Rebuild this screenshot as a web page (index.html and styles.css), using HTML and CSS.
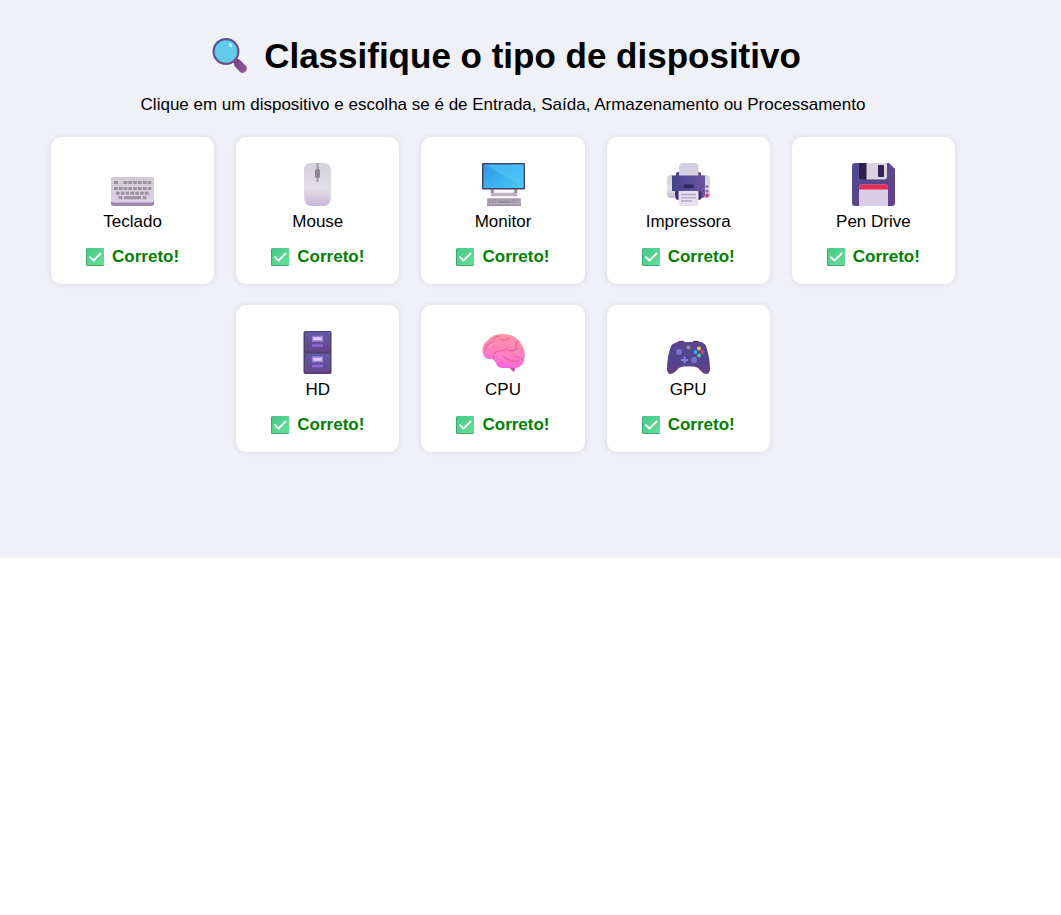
FILE: index.html
```html
<!DOCTYPE html>
<html lang="pt-BR">
<head>
<meta charset="utf-8">
<title>Classifique o tipo de dispositivo</title>
<link rel="stylesheet" href="styles.css">
</head>
<body>
<svg class="defs" aria-hidden="true">
  <defs>
    <linearGradient id="rim" x2="1" y2="1"><stop stop-color="#405a95"/><stop offset="1" stop-color="#84458b"/></linearGradient>
    <linearGradient id="handle" x2="1" y2="1"><stop stop-color="#6d4080"/><stop offset="1" stop-color="#9a589b"/></linearGradient>
    <linearGradient id="shell" x2="0" y2="1"><stop stop-color="#d3d2d7"/><stop offset=".6" stop-color="#e2dfe6"/><stop offset="1" stop-color="#c7b6d8"/></linearGradient>
    <linearGradient id="keys" x2="0" y2="1"><stop stop-color="#cfcbd5"/><stop offset="1" stop-color="#dccfe8"/></linearGradient>
    <linearGradient id="screen" x2="1" y2="1"><stop stop-color="#2f96e6"/><stop offset="1" stop-color="#45caf8"/></linearGradient>
    <linearGradient id="violet" x2="1" y2="0"><stop stop-color="#46428c"/><stop offset="1" stop-color="#6a559f"/></linearGradient>
    <linearGradient id="disk" x2="1" y2="1"><stop stop-color="#4b4c93"/><stop offset="1" stop-color="#664086"/></linearGradient>
    <linearGradient id="drawer" x2="0" y2="1"><stop stop-color="#5e5da6"/><stop offset="1" stop-color="#67458b"/></linearGradient>
    <linearGradient id="brain" x1=".6" x2=".4" y2="1"><stop stop-color="#ff939d"/><stop offset=".55" stop-color="#ff80bf"/><stop offset="1" stop-color="#f564df"/></linearGradient>
    <linearGradient id="pad" x2="0" y2="1"><stop stop-color="#59458e"/><stop offset=".55" stop-color="#514590"/><stop offset="1" stop-color="#633f7f"/></linearGradient>
    <linearGradient id="tick" x2="1" y2="1"><stop stop-color="#48c987"/><stop offset="1" stop-color="#64df98"/></linearGradient>
    <symbol id="check" viewBox="0 0 18 18">
      <rect width="18" height="18" rx="1.5" fill="#3da873"/><rect x="1" width="17" height="17" rx="1" fill="url(#tick)"/>
      <path d="M4 9.2l3.500 3.500L14.500 5.500" fill="none" stroke="#fff" stroke-width="1.900" stroke-linecap="round" stroke-linejoin="round"/>
    </symbol>
  </defs>
</svg>
<main class="page">
  <h1 class="title">
    <svg class="title-icon" viewBox="0 0 36 36" aria-hidden="true">
      <path d="M21 21l6 6" stroke="#70437f" stroke-width="3"/>
      <path d="M21.500 24.500q-1-3 3-4 2 0 3.500 1.500l6 6q2 3-.5 5.500t-5.500.5l-5.500-6z" fill="url(#handle)"/>
      <circle cx="14" cy="13.500" r="12.400" fill="#62cbea" stroke="url(#rim)" stroke-width="2.200"/>
      <ellipse cx="18.500" cy="7" rx="1.500" ry="2.300" fill="#bcebf8" transform="rotate(-30 18.500 7)"/>
    </svg>
    <span>Classifique o tipo de dispositivo</span>
  </h1>
  <p class="intro">Clique em um dispositivo e escolha se é de Entrada, Saída, Armazenamento ou Processamento</p>
  <ul class="devices">
    <li class="card">
      <svg class="device-icon" viewBox="0 0 43 43" aria-hidden="true">
        <path d="M2 14.500h39q2 0 2 2v24q0 2.500-3 2.500H3q-3 0-3-2.500v-24q0-2 2-2z" fill="#9c87ac"/>
        <path d="M2 14.500h39q2 0 2 2v21q0 2-2.500 2h-38q-2.500 0-2.500-2v-21q0-2 2-2z" fill="url(#keys)"/>
        <g stroke="#99939f" stroke-width="3" fill="none"><path d="M3 19.500h4M12.500 19.500h28" stroke-dasharray="3.800 1"/><path d="M3 25.500h37.500" stroke-dasharray="3.700 1.100"/><path d="M5 30.200h33" stroke-dasharray="3.700 1.100"/><path d="M7.500 34.700h4M13 34.700h17M31.500 34.700h4"/></g>
      </svg>
      <span class="name">Teclado</span>
      <strong class="result"><svg class="check" aria-hidden="true"><use href="#check"/></svg>Correto!</strong>
    </li>
    <li class="card">
      <svg class="device-icon" viewBox="0 0 43 43" aria-hidden="true">
        <path d="M15 0h13q7 0 7 7v26q0 10-8 10H16q-8 0-8-10V7q0-7 7-7z" fill="url(#shell)"/>
        <path d="M21.500 0v19" stroke="#aaa7ae" stroke-width="2.600"/><rect x="19" y="6" width="5" height="9" rx="2" fill="#8b8692"/>
      </svg>
      <span class="name">Mouse</span>
      <strong class="result"><svg class="check" aria-hidden="true"><use href="#check"/></svg>Correto!</strong>
    </li>
    <li class="card">
      <svg class="device-icon" viewBox="0 0 43 43" aria-hidden="true">
        <path d="M10.500 26v5.500h23V26" fill="none" stroke="#bdb4c3" stroke-width="3.600"/>
        <path d="M10 26v4M34 26v4" stroke="#887e93" stroke-width="1.500"/>
        <rect width="43" height="26.500" rx="1" fill="#4b4059"/><path d="M1.500 1.500h40v23.500h-40z" fill="url(#screen)"/><path d="M3 1.500h38.500v23z" fill="#55c8fa" opacity=".55"/>
        <rect x="5" y="35" width="34" height="8" rx="1" fill="#b9aec2"/>
        <path d="M6.500 37h31M6.500 39.300h31" stroke="#8e8795" stroke-width="1.400" stroke-dasharray="2 1"/>
        <path d="M17 39.300h11" stroke="#8e8795" stroke-width="1.400"/>
        <path d="M5 42.200h34" stroke="#9c8aaa" stroke-width="1.600"/>
      </svg>
      <span class="name">Monitor</span>
      <strong class="result"><svg class="check" aria-hidden="true"><use href="#check"/></svg>Correto!</strong>
    </li>
    <li class="card">
      <svg class="device-icon" viewBox="0 0 43 43" aria-hidden="true">
        <rect y="12" width="43" height="23" rx="4" fill="url(#shell)"/>
        <path d="M9 11q0-2 2-2h21q2 0 2 2v3H9z" fill="#4d407e"/>
        <path d="M12 13V4q0-4 4-4h11.500q4 0 4 4v9z" fill="#d6cfe2"/>
        <path d="M5 12.500h33V31q0 4-4 4H12q-4 0-4-4v-3H5z" fill="url(#violet)"/>
        <rect x="16.500" y="21.500" width="10.500" height="3.500" rx="1.700" fill="#30275f"/>
        <path d="M8.500 30.500q0-2.500 2-2.500h22q2 0 2 2.500V34q0 3-3 3h-20q-3 0-3-3z" fill="#3b2e63"/>
        <path d="M11.500 28h20v12q0 3-3 3h-14q-3 0-3-3z" fill="#e5dff0"/>
        <path d="M14 31.500h15M14 34.700h15M14 38h11" stroke="#b4a8bf" stroke-width="1.300"/>
        <circle cx="40" cy="23.500" r="1.600" fill="#817984"/><circle cx="40" cy="28" r="1.600" fill="#817984"/><circle cx="40" cy="32.500" r="1.900" fill="#e54475"/>
      </svg>
      <span class="name">Impressora</span>
      <strong class="result"><svg class="check" aria-hidden="true"><use href="#check"/></svg>Correto!</strong>
    </li>
    <li class="card">
      <svg class="device-icon" viewBox="0 0 43 43" aria-hidden="true">
        <path d="M3 0h34l6 6v34q0 3-3 3H3q-3 0-3-3V3q0-3 3-3z" fill="url(#disk)"/>
        <path d="M7 0h28v14q0 2.500-2.500 2.500h-23Q7 16.500 7 14z" fill="#30204d"/><path d="M14.500 0H35v14q0 2.500-2.500 2.500h-18z" fill="#d8d3e1"/><rect x="26" y="2" width="6" height="12" rx="1" fill="#35225a"/>
        <path d="M7 43V23.500q0-2 2-2h25q2 0 2 2V43z" fill="#dacbe7"/><path d="M7 26.500v-3q0-2 2-2h25q2 0 2 2v3z" fill="#e62b55"/>
      </svg>
      <span class="name">Pen Drive</span>
      <strong class="result"><svg class="check" aria-hidden="true"><use href="#check"/></svg>Correto!</strong>
    </li>
    <li class="card">
      <svg class="device-icon" viewBox="0 0 43 43" aria-hidden="true">
        <rect x="7.500" width="28" height="43" rx="2" fill="#513e6d"/>
        <rect x="9" y="1" width="25" height="19.500" rx="1.500" fill="url(#drawer)"/><rect x="9" y="22.500" width="25" height="19" rx="1.500" fill="url(#drawer)"/>
        <path d="M16.500 5.500h10V10h-10zM16.500 26h10v4.500h-10z" fill="#decdf2" stroke="#a07ad7" stroke-width="1.300"/>
        <path d="M16 14.500h11M16 35h11" stroke="#9068db" stroke-width="2.500"/>
      </svg>
      <span class="name">HD</span>
      <strong class="result"><svg class="check" aria-hidden="true"><use href="#check"/></svg>Correto!</strong>
    </li>
    <li class="card">
      <svg class="device-icon" viewBox="0 0 43 43" aria-hidden="true">
        <path d="M26 36l7-1.500-.5 7Q29 39 27 36z" fill="#d844a3"/>
        <path d="M1 22Q-1 14 6 9 11 3 20 3q12 0 18 8 6 8 4.500 16-1 9-9 10H21q-6 0-7-5-2-3-4-4-8 1-9-6z" fill="url(#brain)"/>
        <g fill="none" stroke="#e8609f" stroke-width="1.100" stroke-linecap="round"><path d="M3 19q2-7 9-9M12 8q2-3 5-3M18 8q5 3 9-1M26 19q5 2 10-2M34 18q-1-5 2-8M12 27q-1-6 5-7 6 0 8-3M27 30q6 2 10-1M33 25q5 1 8 4M21 26q4 3 7 2"/></g>
        <path d="M7 16q3-5 8-3M21 5q6-1 11 4M17 27q3-2 5 1" fill="none" stroke="#ffb0cf" stroke-linecap="round" opacity=".6"/>
      </svg>
      <span class="name">CPU</span>
      <strong class="result"><svg class="check" aria-hidden="true"><use href="#check"/></svg>Correto!</strong>
    </li>
    <li class="card">
      <svg class="device-icon" viewBox="0 0 43 43" aria-hidden="true">
        <path d="M9 12q3-3 8-2v3H9zM26 10q6-1 8 2v3h-8z" fill="#692e52"/>
        <path d="M8 12q2-1 4-1h20q5 0 7 4 4 12 4 23 0 5-4 5-3 0-5-3l-3-3q-2-1.500-5-1.500h-9q-3 0-5 1.500l-3 3q-3 3-5 3-4 0-4-5Q0 26 4 15q1-2 4-3z" fill="url(#pad)"/>
        <circle cx="12" cy="21" r="3" fill="#7771cf"/><circle cx="27" cy="29" r="3" fill="#7771cf"/><path d="M17.500 25.500v7M14 29h7" stroke="#8981e5" stroke-width="1.800"/>
        <circle cx="21.500" cy="16.500" r="2" fill="#948b9a"/><circle cx="32" cy="17.500" r="1.900" fill="#fbc557"/><circle cx="28.500" cy="21" r="1.900" fill="#27b8ee"/><circle cx="35.500" cy="21" r="1.900" fill="#f43d61"/><circle cx="32" cy="24.500" r="1.900" fill="#36d994"/>
      </svg>
      <span class="name">GPU</span>
      <strong class="result"><svg class="check" aria-hidden="true"><use href="#check"/></svg>Correto!</strong>
    </li>
  </ul>
</main>
</body>
</html>
```
FILE: styles.css
```css
* { box-sizing: border-box; }
body { margin: 0; background: #fff; color: #000; font: 17px/20px "Liberation Sans", Arial, sans-serif; }
.defs { position: absolute; width: 0; height: 0; }
.page { padding: 36px 106px 106px 51px; background: #f0f1f6; text-align: center; }
.title { display: flex; justify-content: center; align-items: center; gap: 16px; margin: 0 0 19px; padding-left: 7px; font-size: 35px; line-height: 40px; }
.title-icon { width: 36px; height: 36px; flex: none; }
.intro { margin: 0 0 22px; }
.devices { display: flex; flex-wrap: wrap; justify-content: center; gap: 21px 22px; margin: 0; padding: 0; list-style: none; }
.card { display: flex; flex-direction: column; align-items: center; width: calc((100% - 88px) / 5); min-width: 140px; padding: 26px 16px 17px; border-radius: 10px; background: #fff; box-shadow: 0 0 6px rgba(0, 0, 0, .1); }
.device-icon { width: 43px; height: 43px; }
.name { margin-top: 6px; }
.result { display: flex; align-items: center; gap: 8px; margin-top: 15px; color: green; }
.check { width: 18px; height: 18px; }
```
